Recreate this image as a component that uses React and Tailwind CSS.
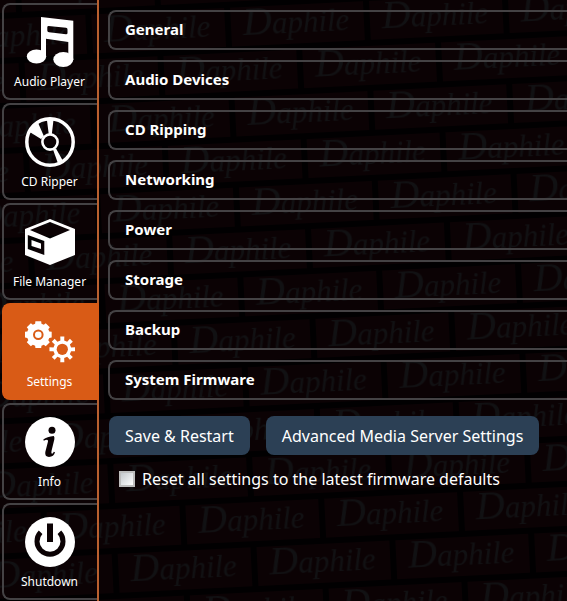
const gearPoints = (cx, cy, outer, inner, teeth, base, tip) => {
  const step = (Math.PI * 2) / teeth;
  const pts = [];
  for (let i = 0; i < teeth; i++) {
    const a = i * step - Math.PI / 2;
    [[-base, inner], [-tip, outer], [tip, outer], [base, inner]].forEach(([k, r]) => {
      pts.push(`${(cx + r * Math.cos(a + k * step)).toFixed(2)},${(cy + r * Math.sin(a + k * step)).toFixed(2)}`);
    });
  }
  return pts.join(" ");
};

const NoteIcon = () => (
  <>
    <path fillRule="evenodd" d="M16 0 L48.3 3.8 V43 H43.3 V25 L21 21.8 V40 H16 Z M23.5 9 Q22.3 9 22.3 10.2 V13.5 Q22.3 15 24 15.2 L41 17.3 Q42.5 17.4 42.5 16 V12.5 Q42.5 11 41 10.8 Z" />
    <ellipse cx="11.5" cy="39.5" rx="9.7" ry="7" />
    <ellipse cx="38.3" cy="42.5" rx="10" ry="7.4" />
  </>
);

const DiscIcon = () => (
  <>
    <circle cx="25" cy="25" r="23.2" fill="none" stroke="white" strokeWidth="3.5" />
    <circle cx="25" cy="25" r="7.6" fill="none" stroke="white" strokeWidth="2.6" />
    <path d="M2.7 13.7 L12.5 4.5 L19 19.5 L16 22 Z M21.8 2 H28.6 L26.8 17.5 H23.8 Z M28 32.5 L31 31.5 L38 44 L33 46.5 Z" />
  </>
);

const BoxIcon = () => (
  <path fillRule="evenodd" d="M25 2 L50 12 V38 L25 48 L0 38 V12 Z M25 5 L5 13 L25 21.5 L45 13 Z M2.8 18 V32 L19.3 38 V24 Z M6.5 23 L16 26.5 V32 L6.5 29 Z" />
);

const GearsIcon = () => (
  <>
    <polygon points={gearPoints(13.3, 17.7, 13.7, 11.4, 8, 0.36, 0.27)} />
    <circle cx="13.3" cy="17.7" r="4.3" fill="none" stroke="#d95b16" strokeWidth="2" />
    <polygon points={gearPoints(37.3, 32.3, 13, 9, 8, 0.27, 0.2)} />
    <circle cx="37.3" cy="32.3" r="5.6" fill="#d95b16" />
  </>
);

const InfoIcon = () => (
  <>
    <circle cx="25" cy="25" r="25" />
    <g fill="#0b0204">
      <circle cx="27" cy="13.3" r="3.5" />
      <path d="M18.3 22.5 Q22 19.5 28.8 19 Q29.8 20 29.3 22.5 L26.5 34 Q26 36.8 27 36.8 Q28 36.8 28.8 34.8 L30 35.3 Q28.8 39.8 24 40 Q19.6 39.8 20.3 35 L23 24.5 Q23.2 23 22 22.8 Q20.3 22.8 18.8 23.8 Z" />
    </g>
  </>
);

const PowerIcon = () => (
  <>
    <circle cx="25" cy="25" r="25" />
    <rect x="22" y="6.5" width="6" height="18.5" fill="#0b0204" />
    <path d="M15.6 15.3 A13 13 0 1 0 34.4 15.3" fill="none" stroke="#0b0204" strokeWidth="5" />
  </>
);

const tabs = [
  { label: "Audio Player", Icon: NoteIcon },
  { label: "CD Ripper", Icon: DiscIcon },
  { label: "File Manager", Icon: BoxIcon },
  { label: "Settings", Icon: GearsIcon, active: true },
  { label: "Info", Icon: InfoIcon },
  { label: "Shutdown", Icon: PowerIcon },
];

const sections = ["General", "Audio Devices", "CD Ripping", "Networking", "Power", "Storage", "Backup", "System Firmware"];

function Wordmark({ x, y }) {
  return (
    <text x={x} y={y} fontSize="31">
      <tspan fontSize="40">D</tspan>aphile
    </text>
  );
}

function BrickWall() {
  return (
    <svg className="absolute inset-0 -z-10 h-full w-full" aria-hidden="true">
      <defs>
        <pattern id="bricks" width="139" height="90" patternUnits="userSpaceOnUse" patternTransform="translate(368 43) rotate(-2.8)">
          <rect width="139" height="90" fill="#010001" />
          <g fill="#0b0204">
            <rect x="-66" y="3" width="133" height="39" />
            <rect x="73" y="3" width="133" height="39" />
            <rect x="3" y="48" width="133" height="39" />
          </g>
          <g fill="#111113" fontFamily="'Liberation Serif', serif" fontStyle="italic">
            <Wordmark x={-54} y={31} />
            <Wordmark x={85} y={31} />
            <Wordmark x={15} y={76} />
          </g>
        </pattern>
      </defs>
      <rect width="100%" height="100%" fill="url(#bricks)" />
    </svg>
  );
}

function Tab({ label, Icon, active }) {
  return (
    <button
      type="button"
      aria-current={active ? "page" : undefined}
      className={`flex h-[97px] flex-col items-center rounded-l-lg border-2 border-r-0 pt-3 text-xs leading-5 ${
        active ? "-mr-0.5 border-[#d95b16] bg-[#d95b16] pr-1" : "border-[#444244] pr-0.5"
      }`}
    >
      <svg viewBox="0 0 50 50" className="mb-[5px] size-[50px] shrink-0 fill-white" aria-hidden="true">
        <Icon />
      </svg>
      {label}
    </button>
  );
}

export default function App() {
  return (
    <div className="relative isolate flex min-h-screen overflow-hidden bg-black font-['Noto_Sans','Open_Sans',sans-serif] text-white">
      <BrickWall />
      <nav className="flex w-[99px] shrink-0 flex-col gap-[3px] border-r-2 border-[#b9602f] pt-[3px] pl-0.5">
        {tabs.map((tab) => (
          <Tab key={tab.label} {...tab} />
        ))}
      </nav>
      <main className="min-w-0 flex-1 pt-2.5 pl-[9px]">
        <div className="flex flex-col gap-2.5">
          {sections.map((name) => (
            <button key={name} type="button" className="h-10 rounded-l-lg border-2 border-r-0 border-[#444244] pb-0.5 pl-[15px] text-left text-[15px] font-bold">
              {name}
            </button>
          ))}
        </div>
        <div className="mt-4 flex gap-4 pl-px whitespace-nowrap">
          <button type="button" className="h-[39px] rounded-lg bg-[#2c4055] px-4">Save &amp; Restart</button>
          <button type="button" className="h-[39px] rounded-lg bg-[#2c4055] px-4">Advanced Media Server Settings</button>
        </div>
        <label className="mt-3 flex items-center gap-[7px] pl-[11px] whitespace-nowrap">
          <input type="checkbox" className="size-4 appearance-none border-2 border-[#bdbdbd] bg-linear-to-br from-[#c4c8cc] to-white checked:bg-[#2c4055]" />
          Reset all settings to the latest firmware defaults
        </label>
      </main>
    </div>
  );
}
